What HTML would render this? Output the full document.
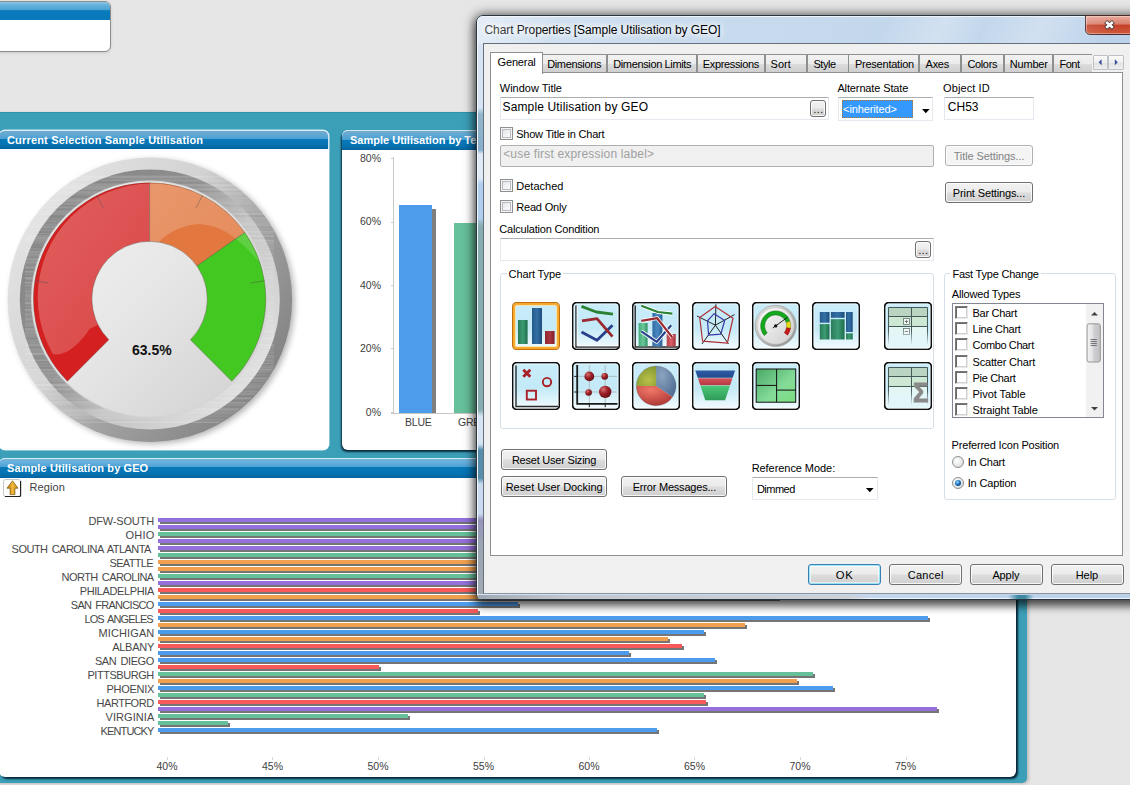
<!DOCTYPE html><html><head><meta charset="utf-8"><title>Chart Properties</title><style>
*{box-sizing:border-box}
html,body{margin:0;padding:0;background:#e6e6e6}
body{width:1130px;height:785px;overflow:hidden;background:#e6e6e6;position:relative;font-family:"Liberation Sans",sans-serif;font-size:11px;color:#000}
.abs{position:absolute}
#teal{left:-10px;top:111.6px;width:1037px;height:671.6px;background:#3c9fb8;border-top:1px solid #2a93b0;border-radius:0 0 5px 0;box-shadow:2px 1px 3px rgba(0,0,0,.18)}
#tl{left:-6px;top:1px;width:117px;height:50.8px;background:#fff;border:1px solid #8c8c8c;border-radius:6px;overflow:hidden;box-shadow:0 1px 3px rgba(0,0,0,.12)}
#tl i{display:block;height:18.2px;background:linear-gradient(#8ac4e6 0,#62b0dc 3.5px,#4aa2d4 8px,#0879ba 8.6px,#0879ba 100%)}
.panel{position:absolute;background:#fff;border-radius:6px}
.sh{position:absolute;border-radius:6px}
.ph{position:absolute;left:0;top:0;right:0;height:19px;border-top:1px solid #d4ecf8;border-right:1px solid #cfe6f4;border-radius:6px 6px 0 0;background:linear-gradient(#74aacb 0,#5fa8d4 4px,#4a9fd2 8px,#0878b9 8.5px,#0774b4 13px,#04659e 100%);color:#fff;font-weight:bold;font-size:11px;line-height:17px;padding-left:7px;white-space:nowrap;letter-spacing:0}
.cl{position:absolute;color:#404040;font-size:11px;white-space:nowrap;letter-spacing:-.3px}
.yl{position:absolute;color:#404040;font-size:10.5px;white-space:nowrap;text-align:right;width:40px}
/* dialog */
#dlg{left:476px;top:15px;width:700px;height:585px;border-radius:7px 7px 6px 6px;border:1px solid #2b3540;background:linear-gradient(90deg,#d6e4f3 0,#c9dbee 30%,#c3d7ec 60%,#b9d0e9 100%);box-shadow:0 1px 11px 2px rgba(0,0,0,.6),0 6px 9px 0 rgba(0,0,0,.42)}
#dlg:after{content:"";position:absolute;left:1px;top:1px;right:0;height:27px;border-radius:6px 6px 0 0;background:linear-gradient(115deg,rgba(255,255,255,.35) 0,rgba(255,255,255,0) 12%,rgba(255,255,255,0) 58%,rgba(255,255,255,.28) 66%,rgba(255,255,255,.05) 72%,rgba(255,255,255,.3) 80%,rgba(255,255,255,0) 90%)}
#dlg:before{content:"";position:absolute;left:0;top:0;right:0;bottom:0;border:1px solid rgba(255,255,255,.75);border-radius:6px}
#dtitle{left:7.5px;top:6px;font-size:12px;letter-spacing:-.08px;line-height:16px;white-space:nowrap;color:#000;text-shadow:0 0 6px #fff,0 0 6px #fff,0 0 10px #fff}
#close{left:608px;top:-1px;width:60px;height:20px;border:1px solid #4a2a2a;border-radius:0 0 5px 5px;background:linear-gradient(#e9a99b 0,#d8806e 45%,#c5402a 50%,#cf5a3a 100%);box-shadow:inset 0 0 0 1px rgba(255,255,255,.35)}
#client{left:6px;top:28px;width:700px;height:551px;background:#f0f0f0;border:1px solid #6a7480}
.lbl{position:absolute;white-space:nowrap;font-size:11px;line-height:13px;color:#000;letter-spacing:-.3px}
.tab{position:absolute;top:10px;height:18px;border:1px solid #8e8f8f;border-bottom:none;background:linear-gradient(#f2f2f2 0,#ebebeb 50%,#dddddd 51%,#cfcfcf 100%);font-size:11px;line-height:19px;padding-left:5px;white-space:nowrap;letter-spacing:-.35px;overflow:hidden}
.tab.sel{top:8px;height:21px;background:#fff;z-index:3;line-height:18px;padding-left:6px}
#page{left:7px;top:28px;width:633px;height:484px;background:#fff;border:1px solid #8e8f8f}
.inp{position:absolute;background:#fff;border:1px solid #e3e9ef;border-top-color:#abadb3;font-size:12px;line-height:15px;padding:5px 0 0 3px;white-space:nowrap;border-radius:1px}
.inp.dis{background:#f0f0f0;border-color:#afafaf;color:#a0a0a0;border-radius:2px}
.btn{position:absolute;border:1px solid #707070;border-radius:3px;background:linear-gradient(#f2f2f2 0,#ebebeb 48%,#dddddd 52%,#cfcfcf 100%);box-shadow:inset 0 0 0 1px rgba(255,255,255,.8);font-size:11px;text-align:center;white-space:nowrap;letter-spacing:-.3px}
.btn.dis{color:#838383;border-color:#adb2b5;background:#f4f4f4}
.btn.def{border-color:#3c7fb1;box-shadow:inset 0 0 0 1px #48d8fb88, inset 0 0 0 2px rgba(255,255,255,.6)}
.cb{position:absolute;width:13px;height:13px;border:1px solid #8e8f8f;background:linear-gradient(135deg,#d9dcdf 0,#f4f5f6 60%,#fff 100%);box-shadow:inset 0 0 0 1px #f4f4f4,inset 0 0 0 2px #b8bcc2}
.grp{position:absolute;border:1px solid #d5dfe5;border-radius:3px}
.grp>span{position:absolute;top:-8px;left:6px;background:#fff;padding:0 2px;font-size:11px;line-height:13px;white-space:nowrap}
.ico{position:absolute;width:48px;height:48px}
.lcb{position:absolute;width:13px;height:13px;background:#fff;border:1px solid #7a7a7a;border-right-color:#e8e8e8;border-bottom-color:#e8e8e8;box-shadow:inset 1px 1px 0 #6a6a6a,inset -1px -1px 0 #d0d0d0}
.radio{position:absolute;width:12px;height:12px;border-radius:50%;border:1px solid #8e8f8f;background:radial-gradient(circle at 35% 35%,#fff 0,#e4e6e8 60%,#c9ccd0 100%)}
</style></head><body>
<div id="tl" class="abs"><i></i></div>
<div id="teal" class="abs"></div>
<div class="panel" style="left:-1px;top:130px;width:329.5px;height:319.5px;box-shadow:0 0 0 .5px #d8eef8"><div class="ph" style="padding-left:8px;letter-spacing:.17px;line-height:19px">Current Selection Sample Utilisation</div></div>
<svg class="abs" style="left:0;top:150px" width="330" height="300" viewBox="0 150 330 300"><defs>
<linearGradient id="bz1" x1=".1" y1=".2" x2=".9" y2=".8"><stop offset="0" stop-color="#e2e2e2"/><stop offset=".38" stop-color="#d2d2d2"/><stop offset=".62" stop-color="#a2a2a2"/><stop offset="1" stop-color="#848484"/></linearGradient>
<linearGradient id="bz2" x1=".1" y1=".2" x2=".9" y2=".8"><stop offset="0" stop-color="#888"/><stop offset=".38" stop-color="#8e8e8e"/><stop offset=".62" stop-color="#c2c2c2"/><stop offset="1" stop-color="#dedede"/></linearGradient>
<linearGradient id="glg" gradientUnits="userSpaceOnUse" x1="50" y1="200" x2="230" y2="330"><stop offset="0" stop-color="#fff" stop-opacity=".28"/><stop offset="1" stop-color="#fff" stop-opacity=".13"/></linearGradient>
<filter id="brush" x="0" y="0" width="100%" height="100%"><feTurbulence type="fractalNoise" baseFrequency="0.004 0.45" numOctaves="2" seed="3"/><feColorMatrix type="matrix" values="0 0 0 0 1  0 0 0 0 1  0 0 0 0 1  1.6 0 0 0 -.55"/><feComposite in2="SourceGraphic" operator="in"/></filter>
<linearGradient id="face" x1="0" y1="0" x2="1" y2="1"><stop offset="0" stop-color="#f4f4f4"/><stop offset=".5" stop-color="#e6e6e6"/><stop offset="1" stop-color="#cfcfcf"/></linearGradient>
<filter id="gsh" x="-10%" y="-10%" width="125%" height="125%"><feGaussianBlur stdDeviation="3"/></filter>
<clipPath id="arcs"><path d="M67.43 381.17A116.2 116.2 0 1 1 231.77 381.17L190.40 339.80A57.7 57.7 0 1 0 108.80 339.80Z"/></clipPath>
<mask id="glm"><rect x="0" y="150" width="330" height="300" fill="#fff"/>
<path fill="#000" d="M40 349 Q54 358.5 67.3 351.5 Q80 344 89.7 328.7 L150 300 L160.6 239.8 Q178 225 200 224 Q220 225.5 234.7 237.8 Q248 248.5 259 262 L300 300 L300 440 L10 440 Z"/></mask>
</defs><circle cx="152.6" cy="302.0" r="142" fill="#000" opacity=".3" filter="url(#gsh)"/><circle cx="149.9" cy="299.8" r="142.2" fill="url(#bz1)"/><circle cx="149.79999999999998" cy="299.5" r="130" fill="url(#bz2)"/><circle cx="149.6" cy="299.0" r="124" fill="none" stroke="#fff" stroke-width="36" filter="url(#brush)" opacity=".32"/><circle cx="149.6" cy="299.0" r="118.6" fill="#d4d4d4"/><circle cx="149.6" cy="299.0" r="117.4" fill="url(#face)"/><path d="M67.43 381.17A116.2 116.2 0 0 1 149.60 182.80L149.60 241.30A57.7 57.7 0 0 0 108.80 339.80Z" fill="#d42020"/><path d="M149.60 182.80A116.2 116.2 0 0 1 244.79 232.35L196.87 265.90A57.7 57.7 0 0 0 149.60 241.30Z" fill="#e27840"/><path d="M244.79 232.35A116.2 116.2 0 0 1 231.77 381.17L190.40 339.80A57.7 57.7 0 0 0 196.87 265.90Z" fill="#42c820"/><g clip-path="url(#arcs)"><circle cx="151.29999999999998" cy="297.2" r="113.6" fill="url(#glg)" mask="url(#glm)"/></g><path d="M67.43 381.17A116.2 116.2 0 1 1 231.77 381.17L190.40 339.80A57.7 57.7 0 1 0 108.80 339.80Z" fill="none" stroke="#5a4a40" stroke-opacity=".55" stroke-width=".7"/><path d="M149.6 241.3L149.6 182.8" stroke="#5a4030" stroke-opacity=".6" stroke-width=".8"/><path d="M196.9 265.9L244.8 232.4" stroke="#5a4030" stroke-opacity=".6" stroke-width=".8"/><path d="M34.8 280.8L48.7 283.0" stroke="#555" stroke-opacity=".6" stroke-width=".8"/><path d="M96.8 195.5L103.2 207.9" stroke="#555" stroke-opacity=".6" stroke-width=".8"/><path d="M202.4 195.5L196.0 207.9" stroke="#555" stroke-opacity=".6" stroke-width=".8"/><path d="M264.4 280.8L250.5 283.0" stroke="#555" stroke-opacity=".6" stroke-width=".8"/><text x="151.8" y="354.9" text-anchor="middle" font-family="Liberation Sans, sans-serif" font-weight="bold" font-size="14" fill="#111">63.5%</text></svg>
<div class="panel" style="left:342px;top:130px;width:400px;height:319.5px;box-shadow:-1px 2px 2px rgba(0,25,40,.85)"><div class="ph" style="height:20px;line-height:19px;padding-left:8px;background:linear-gradient(#74aacb 0,#5fa8d4 4px,#4a9fd2 8.5px,#0878b9 9px,#0774b4 14px,#04659e 100%)">Sample Utilisation by Team</div></div>
<div class="yl" style="left:341px;top:150.7px;line-height:14px;letter-spacing:0">80%</div>
<div class="abs" style="left:391px;top:158px;width:2px;height:1px;background:#cfcfcf"></div>
<div class="yl" style="left:341px;top:214.2px;line-height:14px;letter-spacing:0">60%</div>
<div class="abs" style="left:391px;top:222px;width:2px;height:1px;background:#cfcfcf"></div>
<div class="yl" style="left:341px;top:277.7px;line-height:14px;letter-spacing:0">40%</div>
<div class="abs" style="left:391px;top:285px;width:2px;height:1px;background:#cfcfcf"></div>
<div class="yl" style="left:341px;top:341.2px;line-height:14px;letter-spacing:0">20%</div>
<div class="abs" style="left:391px;top:348px;width:2px;height:1px;background:#cfcfcf"></div>
<div class="yl" style="left:341px;top:404.7px;line-height:14px;letter-spacing:0">0%</div>
<div class="abs" style="left:391px;top:412px;width:2px;height:1px;background:#cfcfcf"></div>
<div class="abs" style="left:393px;top:157px;width:1px;height:257px;background:#c8c8c8"></div>
<div class="abs" style="left:391px;top:413px;width:300px;height:1px;background:#c8c8c8"></div>
<div class="abs" style="left:432px;top:209px;width:4px;height:204px;background:#7f7f7f"></div>
<div class="abs" style="left:399px;top:205px;width:33px;height:208px;background:#4d9beb"></div>
<div class="abs" style="left:454px;top:223px;width:33px;height:190px;background:#66c09a"></div>
<div class="cl" style="left:405px;top:415px;line-height:14px;letter-spacing:-.2px;font-size:10.5px">BLUE</div>
<div class="cl" style="left:458px;top:415px;line-height:14px;letter-spacing:-.2px;font-size:10.5px">GREEN</div>
<div class="panel" style="left:-1px;top:458px;width:1017px;height:319.2px;box-shadow:2px 2px 2px rgba(0,25,40,.9)"><div class="ph" style="padding-left:8px;letter-spacing:.1px;height:20px;line-height:18px;background:linear-gradient(#74b4dc 0,#62aedb 4px,#4aa2d4 8px,#0878b9 8.5px,#0774b4 14px,#04659e 100%)">Sample Utilisation by GEO</div></div>
<svg class="abs" style="left:2px;top:478px" width="20" height="20" viewBox="0 0 20 20"><defs><linearGradient id="ag" x1="0" y1="0" x2="1" y2="0"><stop offset="0" stop-color="#b87808"/><stop offset=".5" stop-color="#f0b838"/><stop offset="1" stop-color="#c88a10"/></linearGradient></defs>
<rect x="1.5" y="1.5" width="17" height="17" rx="2" fill="#fff" stroke="#c8c8c8"/><path d="M3 18.5H17.5Q18.6 18.5 18.6 17.4V3" fill="none" stroke="#222" stroke-width="1.2"/>
<path d="M10.5 2.8L16 10.2H12.9V16.6H8.1V10.2H5z" fill="url(#ag)" stroke="#7a5206" stroke-width=".7"/></svg>
<div class="cl" style="left:29.5px;top:480px;line-height:14px;letter-spacing:.12px;font-size:11px">Region</div>
<div class="cl" style="left:88.4px;top:514.3px;line-height:14px;letter-spacing:-0.164px;word-spacing:1.6px;color:#484848">DFW-SOUTH</div>
<div class="cl" style="left:125.6px;top:528.3px;line-height:14px;letter-spacing:0.196px;word-spacing:1.6px;color:#484848">OHIO</div>
<div class="cl" style="left:11.6px;top:542.3px;line-height:14px;letter-spacing:-0.517px;word-spacing:1.6px;color:#484848">SOUTH CAROLINA ATLANTA</div>
<div class="cl" style="left:109.5px;top:556.3px;line-height:14px;letter-spacing:-0.684px;word-spacing:1.6px;color:#484848">SEATTLE</div>
<div class="cl" style="left:61.6px;top:570.3px;line-height:14px;letter-spacing:-0.561px;word-spacing:1.6px;color:#484848">NORTH CAROLINA</div>
<div class="cl" style="left:79.7px;top:584.3px;line-height:14px;letter-spacing:-0.388px;word-spacing:1.6px;color:#484848">PHILADELPHIA</div>
<div class="cl" style="left:70.8px;top:598.3px;line-height:14px;letter-spacing:-0.713px;word-spacing:1.6px;color:#484848">SAN FRANCISCO</div>
<div class="cl" style="left:84.4px;top:612.3px;line-height:14px;letter-spacing:-0.873px;word-spacing:1.6px;color:#484848">LOS ANGELES</div>
<div class="cl" style="left:98.6px;top:626.3px;line-height:14px;letter-spacing:0.100px;word-spacing:1.6px;color:#484848">MICHIGAN</div>
<div class="cl" style="left:112.2px;top:640.3px;line-height:14px;letter-spacing:-0.262px;word-spacing:1.6px;color:#484848">ALBANY</div>
<div class="cl" style="left:94.9px;top:654.3px;line-height:14px;letter-spacing:-0.415px;word-spacing:1.6px;color:#484848">SAN DIEGO</div>
<div class="cl" style="left:87.4px;top:668.3px;line-height:14px;letter-spacing:-0.444px;word-spacing:1.6px;color:#484848">PITTSBURGH</div>
<div class="cl" style="left:106.5px;top:682.3px;line-height:14px;letter-spacing:-0.285px;word-spacing:1.6px;color:#484848">PHOENIX</div>
<div class="cl" style="left:96.6px;top:696.3px;line-height:14px;letter-spacing:-0.487px;word-spacing:1.6px;color:#484848">HARTFORD</div>
<div class="cl" style="left:105.5px;top:710.3px;line-height:14px;letter-spacing:0.073px;word-spacing:1.6px;color:#484848">VIRGINIA</div>
<div class="cl" style="left:100.6px;top:724.3px;line-height:14px;letter-spacing:-0.885px;word-spacing:1.6px;color:#484848">KENTUCKY</div>
<div class="abs" style="left:160px;top:520px;width:800.0px;height:4px;background:#757575"></div>
<div class="abs" style="left:158px;top:518px;width:800.0px;height:4px;background:#9370db"></div>
<div class="abs" style="left:160px;top:527px;width:790.0px;height:4px;background:#757575"></div>
<div class="abs" style="left:158px;top:525px;width:790.0px;height:4px;background:#9370db"></div>
<div class="abs" style="left:160px;top:534px;width:780.0px;height:4px;background:#757575"></div>
<div class="abs" style="left:158px;top:532px;width:780.0px;height:4px;background:#66c09a"></div>
<div class="abs" style="left:160px;top:541px;width:770.0px;height:4px;background:#757575"></div>
<div class="abs" style="left:158px;top:539px;width:770.0px;height:4px;background:#9370db"></div>
<div class="abs" style="left:160px;top:548px;width:795.0px;height:4px;background:#757575"></div>
<div class="abs" style="left:158px;top:546px;width:795.0px;height:4px;background:#9370db"></div>
<div class="abs" style="left:160px;top:555px;width:740.0px;height:4px;background:#757575"></div>
<div class="abs" style="left:158px;top:553px;width:740.0px;height:4px;background:#66c09a"></div>
<div class="abs" style="left:160px;top:562px;width:720.0px;height:4px;background:#757575"></div>
<div class="abs" style="left:158px;top:560px;width:720.0px;height:4px;background:#f0a04e"></div>
<div class="abs" style="left:160px;top:569px;width:700.0px;height:4px;background:#757575"></div>
<div class="abs" style="left:158px;top:567px;width:700.0px;height:4px;background:#f0a04e"></div>
<div class="abs" style="left:160px;top:576px;width:680.0px;height:4px;background:#757575"></div>
<div class="abs" style="left:158px;top:574px;width:680.0px;height:4px;background:#66c09a"></div>
<div class="abs" style="left:160px;top:583px;width:660.0px;height:4px;background:#757575"></div>
<div class="abs" style="left:158px;top:581px;width:660.0px;height:4px;background:#9370db"></div>
<div class="abs" style="left:160px;top:590px;width:640.0px;height:4px;background:#757575"></div>
<div class="abs" style="left:158px;top:588px;width:640.0px;height:4px;background:#f85a5a"></div>
<div class="abs" style="left:160px;top:597px;width:620.0px;height:4px;background:#757575"></div>
<div class="abs" style="left:158px;top:595px;width:620.0px;height:4px;background:#f0a04e"></div>
<div class="abs" style="left:160px;top:604px;width:360.0px;height:4px;background:#757575"></div>
<div class="abs" style="left:158px;top:602px;width:360.0px;height:4px;background:#4d9beb"></div>
<div class="abs" style="left:160px;top:611px;width:320.0px;height:4px;background:#757575"></div>
<div class="abs" style="left:158px;top:609px;width:320.0px;height:4px;background:#f85a5a"></div>
<div class="abs" style="left:160px;top:618px;width:770.0px;height:4px;background:#757575"></div>
<div class="abs" style="left:158px;top:616px;width:770.0px;height:4px;background:#4d9beb"></div>
<div class="abs" style="left:160px;top:625px;width:587.0px;height:4px;background:#757575"></div>
<div class="abs" style="left:158px;top:623px;width:587.0px;height:4px;background:#f0a04e"></div>
<div class="abs" style="left:160px;top:632px;width:545.5px;height:4px;background:#757575"></div>
<div class="abs" style="left:158px;top:630px;width:545.5px;height:4px;background:#4d9beb"></div>
<div class="abs" style="left:160px;top:639px;width:510.0px;height:4px;background:#757575"></div>
<div class="abs" style="left:158px;top:637px;width:510.0px;height:4px;background:#f0a04e"></div>
<div class="abs" style="left:160px;top:646px;width:524.0px;height:4px;background:#757575"></div>
<div class="abs" style="left:158px;top:644px;width:524.0px;height:4px;background:#f85a5a"></div>
<div class="abs" style="left:160px;top:653px;width:471.0px;height:4px;background:#757575"></div>
<div class="abs" style="left:158px;top:651px;width:471.0px;height:4px;background:#4d9beb"></div>
<div class="abs" style="left:160px;top:660px;width:557.0px;height:4px;background:#757575"></div>
<div class="abs" style="left:158px;top:658px;width:557.0px;height:4px;background:#4d9beb"></div>
<div class="abs" style="left:160px;top:667px;width:221.0px;height:4px;background:#757575"></div>
<div class="abs" style="left:158px;top:665px;width:221.0px;height:4px;background:#f85a5a"></div>
<div class="abs" style="left:160px;top:674px;width:655.0px;height:4px;background:#757575"></div>
<div class="abs" style="left:158px;top:672px;width:655.0px;height:4px;background:#66c09a"></div>
<div class="abs" style="left:160px;top:681px;width:639.0px;height:4px;background:#757575"></div>
<div class="abs" style="left:158px;top:679px;width:639.0px;height:4px;background:#f0a04e"></div>
<div class="abs" style="left:160px;top:688px;width:675.0px;height:4px;background:#757575"></div>
<div class="abs" style="left:158px;top:686px;width:675.0px;height:4px;background:#4d9beb"></div>
<div class="abs" style="left:160px;top:695px;width:546.0px;height:4px;background:#757575"></div>
<div class="abs" style="left:158px;top:693px;width:546.0px;height:4px;background:#66c09a"></div>
<div class="abs" style="left:160px;top:702px;width:548.0px;height:4px;background:#757575"></div>
<div class="abs" style="left:158px;top:700px;width:548.0px;height:4px;background:#f85a5a"></div>
<div class="abs" style="left:160px;top:709px;width:779.0px;height:4px;background:#757575"></div>
<div class="abs" style="left:158px;top:707px;width:779.0px;height:4px;background:#9370db"></div>
<div class="abs" style="left:160px;top:716px;width:250.0px;height:4px;background:#757575"></div>
<div class="abs" style="left:158px;top:714px;width:250.0px;height:4px;background:#66c09a"></div>
<div class="abs" style="left:160px;top:723px;width:70.0px;height:4px;background:#757575"></div>
<div class="abs" style="left:158px;top:721px;width:70.0px;height:4px;background:#66c09a"></div>
<div class="abs" style="left:160px;top:730px;width:499.0px;height:4px;background:#757575"></div>
<div class="abs" style="left:158px;top:728px;width:499.0px;height:4px;background:#4d9beb"></div>
<div class="cl" style="left:147.0px;width:40px;text-align:center;top:759px;line-height:14px;letter-spacing:0;font-size:10.5px">40%</div>
<div class="abs" style="left:167px;top:757px;width:1px;height:3px;background:#d8d8d8"></div>
<div class="cl" style="left:252.5px;width:40px;text-align:center;top:759px;line-height:14px;letter-spacing:0;font-size:10.5px">45%</div>
<div class="abs" style="left:272px;top:757px;width:1px;height:3px;background:#d8d8d8"></div>
<div class="cl" style="left:358.0px;width:40px;text-align:center;top:759px;line-height:14px;letter-spacing:0;font-size:10.5px">50%</div>
<div class="abs" style="left:378px;top:757px;width:1px;height:3px;background:#d8d8d8"></div>
<div class="cl" style="left:463.5px;width:40px;text-align:center;top:759px;line-height:14px;letter-spacing:0;font-size:10.5px">55%</div>
<div class="abs" style="left:484px;top:757px;width:1px;height:3px;background:#d8d8d8"></div>
<div class="cl" style="left:569.0px;width:40px;text-align:center;top:759px;line-height:14px;letter-spacing:0;font-size:10.5px">60%</div>
<div class="abs" style="left:589px;top:757px;width:1px;height:3px;background:#d8d8d8"></div>
<div class="cl" style="left:674.5px;width:40px;text-align:center;top:759px;line-height:14px;letter-spacing:0;font-size:10.5px">65%</div>
<div class="abs" style="left:694px;top:757px;width:1px;height:3px;background:#d8d8d8"></div>
<div class="cl" style="left:780.0px;width:40px;text-align:center;top:759px;line-height:14px;letter-spacing:0;font-size:10.5px">70%</div>
<div class="abs" style="left:800px;top:757px;width:1px;height:3px;background:#d8d8d8"></div>
<div class="cl" style="left:885.5px;width:40px;text-align:center;top:759px;line-height:14px;letter-spacing:0;font-size:10.5px">75%</div>
<div class="abs" style="left:906px;top:757px;width:1px;height:3px;background:#d8d8d8"></div><div id="dlg" class="abs"><div id="dtitle" class="abs">Chart Properties [Sample Utilisation by GEO]</div>
<div id="close" class="abs"><svg width="58" height="18" viewBox="0 0 58 18" style="position:absolute;left:0;top:0"><path d="M19.6 5.6L27.4 12.2M27.4 5.6L19.6 12.2" stroke="#4a3a3a" stroke-width="4.4" stroke-linecap="butt"/><path d="M20.2 6.1L26.8 11.7M26.8 6.1L20.2 11.7" stroke="#fff" stroke-width="2.6" stroke-linecap="butt"/></svg></div>
</div>
<div class="abs" style="left:477.5px;top:22px;width:5.5px;height:572px;background:linear-gradient(180deg,rgba(220,232,245,0) 0px,rgba(220,232,245,0) 86px,#86aec2 92px,#7aa6c8 128px,#e2ebf6 132px,#e2ebf6 156px,#a9c9f0 162px,#a9c9f0 196px,#7aa3a4 204px,#7aa3a4 388px,#d5e3f3 394px,#d5e3f3 422px,#3f7f9f 428px,#3f7f9f 456px,#c8d8f0 462px,#c8d8f0 492px,#8c84b2 498px,#909aa6 523px,#98a0a8 572px);opacity:.85"></div>
<div class="abs" style="left:478px;top:594.5px;width:660px;height:4.5px;background:linear-gradient(90deg,#9aa2ac 0,#c0c5cb 90px,#cdd1d6 370px,rgba(190,212,238,0) 392px,rgba(190,212,238,0) 530px,#2f7f98 540px,#2f7f98 547px,rgba(190,212,238,0) 556px);opacity:.9"></div>
<div class="abs" style="left:483px;top:43px;width:660px;height:551px;background:#f0f0f0;border:1px solid #66707c;border-bottom-color:#8a939e"></div>
<div class="abs" style="left:490px;top:72px;width:633px;height:484px;background:#fff;border:1px solid #8e8f8f"></div>
<div class="tab sel" style="left:490px;top:52px;width:52.7px;height:21.5px;padding-left:6.5px;letter-spacing:-0.139px">General</div>
<div class="tab" style="left:542.3px;top:54.4px;width:65.0px;height:18px;padding-left:3.9px;letter-spacing:-0.352px">Dimensions</div>
<div class="tab" style="left:607px;top:54.4px;width:90.0px;height:18px;padding-left:5.2px;letter-spacing:-0.363px">Dimension Limits</div>
<div class="tab" style="left:696.7px;top:54.4px;width:68.4px;height:18px;padding-left:5.1px;letter-spacing:-0.351px">Expressions</div>
<div class="tab" style="left:764.8px;top:54.4px;width:42.0px;height:18px;padding-left:4.8px;letter-spacing:0.009px">Sort</div>
<div class="tab" style="left:806.5px;top:54.4px;width:42.0px;height:18px;padding-left:5.9px;letter-spacing:-0.414px">Style</div>
<div class="tab" style="left:848.2px;top:54.4px;width:71.3px;height:18px;padding-left:5.7px;letter-spacing:-0.224px">Presentation</div>
<div class="tab" style="left:919.2px;top:54.4px;width:42.3px;height:18px;padding-left:5.4px;letter-spacing:-0.285px">Axes</div>
<div class="tab" style="left:961.2px;top:54.4px;width:42.7px;height:18px;padding-left:5.2px;letter-spacing:-0.337px">Colors</div>
<div class="tab" style="left:1003.6px;top:54.4px;width:49.3px;height:18px;padding-left:5.1px;letter-spacing:-0.165px">Number</div>
<div class="tab" style="left:1052.6px;top:54.4px;width:41.4px;height:18px;padding-left:5.8px;letter-spacing:-0.437px">Font</div>
<div class="abs" style="left:1091.5px;top:52px;width:33px;height:20.4px;background:#f0f0f0"></div>
<div class="abs" style="left:1092.5px;top:55px;width:15.5px;height:14.5px;border:1px solid #bcc2c8;background:linear-gradient(#fbfbfb,#eeeeee 50%,#e0e0e0 51%,#f0f0f0);border-radius:1px"><svg width="14" height="13" style="position:absolute;left:0;top:0"><path d="M7.6 3.2L4.6 6.2L7.6 9.2z" fill="#3a4e9e"/></svg></div>
<div class="abs" style="left:1108px;top:55px;width:15.5px;height:14.5px;border:1px solid #bcc2c8;background:linear-gradient(#fbfbfb,#eeeeee 50%,#e0e0e0 51%,#f0f0f0);border-radius:1px"><svg width="14" height="13" style="position:absolute;left:0;top:0"><path d="M5.8 3.2L8.8 6.2L5.8 9.2z" fill="#3a4e9e"/></svg></div>
<div class="lbl" style="left:499.8px;top:81.6px;font-size:11px;letter-spacing:-0.015px;">Window Title</div>
<div class="lbl" style="left:837.4px;top:81.6px;font-size:11px;letter-spacing:-0.126px;">Alternate State</div>
<div class="lbl" style="left:943.1px;top:81.6px;font-size:11px;letter-spacing:0.082px;">Object ID</div>
<div class="inp" style="left:500px;top:97px;width:329px;height:23px;padding:1.6px 0 0 1.5px;letter-spacing:0.144px">Sample Utilisation by GEO</div>
<div class="btn" style="left:810px;top:100px;width:16px;height:17px;font-size:10px;line-height:18px;letter-spacing:.6px;padding-left:1px">...</div>
<div class="inp" style="left:838px;top:97px;width:95px;height:24px;padding:0"><div style="position:absolute;left:2.5px;top:2.4px;width:71.5px;height:17.6px;background:#3399ff;border:1px dotted #b8742a;color:#fff;font-size:11px;line-height:17px;padding-left:.6px;letter-spacing:-0.124px">&lt;inherited&gt;</div><svg width="10" height="6" style="position:absolute;left:83px;top:10.5px"><path d="M0 0H7.6L3.8 4.2z" fill="#000"/></svg></div>
<div class="inp" style="left:944px;top:97px;width:90px;height:23px;padding:1.6px 0 0 2.8px">CH53</div>
<div class="cb" style="left:500px;top:127px"></div>
<div class="lbl" style="left:516.2px;top:128.0px;font-size:11px;letter-spacing:-0.218px;">Show Title in Chart</div>
<div class="inp dis" style="left:500px;top:145px;width:434px;height:22px;padding:1.3px 0 0 2.2px;letter-spacing:0.175px">&lt;use first expression label&gt;</div>
<div class="btn dis" style="left:945px;top:145px;width:88px;height:20.6px;line-height:20.6px;letter-spacing:-0.097px">Title Settings...</div>
<div class="cb" style="left:500px;top:179px"></div>
<div class="lbl" style="left:516.2px;top:180.0px;font-size:11px;letter-spacing:0.030px;">Detached</div>
<div class="btn" style="left:945px;top:182px;width:88px;height:20.8px;line-height:20.6px;letter-spacing:-0.137px">Print Settings...</div>
<div class="cb" style="left:500px;top:200px"></div>
<div class="lbl" style="left:516.2px;top:201.1px;font-size:11px;letter-spacing:-0.171px;">Read Only</div>
<div class="lbl" style="left:499.3px;top:222.6px;font-size:11px;letter-spacing:-0.188px;">Calculation Condition</div>
<div class="inp" style="left:500px;top:238px;width:434px;height:23px"></div>
<div class="btn" style="left:915px;top:241px;width:16px;height:17px;font-size:10px;line-height:18px;letter-spacing:.6px;padding-left:1px">...</div>
<div class="grp" style="left:500px;top:273px;width:434px;height:155.5px"><span style="left:5.6px;top:-6.4px;letter-spacing:-0.123px">Chart Type</span></div>
<div class="grp" style="left:943.7px;top:273px;width:172.3px;height:227px"><span style="left:5.7px;top:-6.4px;letter-spacing:-0.206px">Fast Type Change</span></div>
<div class="lbl" style="left:951.8px;top:287.5px;font-size:11px;letter-spacing:-0.169px;">Allowed Types</div>
<div class="abs" style="left:952px;top:303px;width:152px;height:115.4px;background:#fff;border:1px solid #828790"></div>
<div class="lcb" style="left:955px;top:305.9px"></div>
<div class="lbl" style="left:972.6px;top:306.9px;font-size:11px;letter-spacing:-0.309px;">Bar Chart</div>
<div class="lcb" style="left:955px;top:322.1px"></div>
<div class="lbl" style="left:972.6px;top:323.1px;font-size:11px;letter-spacing:-0.272px;">Line Chart</div>
<div class="lcb" style="left:955px;top:338.3px"></div>
<div class="lbl" style="left:972.6px;top:339.3px;font-size:11px;letter-spacing:-0.381px;">Combo Chart</div>
<div class="lcb" style="left:955px;top:354.5px"></div>
<div class="lbl" style="left:972.6px;top:355.5px;font-size:11px;letter-spacing:-0.184px;">Scatter Chart</div>
<div class="lcb" style="left:955px;top:370.7px"></div>
<div class="lbl" style="left:972.6px;top:371.7px;font-size:11px;letter-spacing:-0.332px;">Pie Chart</div>
<div class="lcb" style="left:955px;top:386.9px"></div>
<div class="lbl" style="left:972.6px;top:387.9px;font-size:11px;letter-spacing:-0.063px;">Pivot Table</div>
<div class="lcb" style="left:955px;top:403.1px"></div>
<div class="lbl" style="left:972.6px;top:404.1px;font-size:11px;letter-spacing:-0.145px;">Straight Table</div>
<div class="abs" style="left:1086px;top:304px;width:17px;height:113.4px;background:#f1f1f1"></div>
<svg class="abs" style="left:1086px;top:304px" width="17" height="114"><path d="M5 11.5L8.5 8L12 11.5z" fill="#404040"/><path d="M5 103L8.5 106.5L12 103z" fill="#404040"/><defs><linearGradient id="sth" x1="0" y1="0" x2="1" y2="0"><stop offset="0" stop-color="#f4f4f4"/><stop offset=".45" stop-color="#e0e0e2"/><stop offset=".5" stop-color="#cfcfd2"/><stop offset="1" stop-color="#c2c2c6"/></linearGradient></defs><rect x="1.1" y="19.8" width="13.2" height="38.2" rx="2" fill="url(#sth)" stroke="#979797"/><path d="M4.6 35.5H10.8M4.6 37.5H10.8M4.6 39.5H10.8M4.6 41.5H10.8" stroke="#70747a" stroke-width="1"/></svg>
<div class="lbl" style="left:951.6px;top:438.8px;font-size:11px;letter-spacing:-0.195px;">Preferred Icon Position</div>
<div class="radio" style="left:952px;top:456.4px"></div>
<div class="lbl" style="left:967.7px;top:455.7px;font-size:11px;letter-spacing:-0.247px;">In Chart</div>
<div class="radio" style="left:952px;top:477px"><i style="position:absolute;left:2px;top:2px;width:6px;height:6px;border-radius:50%;background:radial-gradient(circle at 40% 35%,#9fe0ff 0,#1a6fb8 45%,#0a2f5c 100%)"></i></div>
<div class="lbl" style="left:967.7px;top:476.8px;font-size:11px;letter-spacing:-0.149px;">In Caption</div>
<div class="btn" style="left:501px;top:449.2px;width:106px;height:20.4px"><span style="position:absolute;left:9.9px;top:0;line-height:20.0px;font-size:11px;letter-spacing:-0.221px">Reset User Sizing</span></div>
<div class="btn" style="left:501px;top:476.2px;width:106px;height:20.5px"><span style="position:absolute;left:3.7px;top:0;line-height:20.1px;font-size:11px;letter-spacing:-0.054px">Reset User Docking</span></div>
<div class="btn" style="left:621px;top:476.2px;width:106px;height:20.5px"><span style="position:absolute;left:10.7px;top:0;line-height:20.1px;font-size:11px;letter-spacing:-0.206px">Error Messages...</span></div>
<div class="lbl" style="left:751.7px;top:462.2px;font-size:11px;letter-spacing:-0.063px;">Reference Mode:</div>
<div class="inp" style="left:752.3px;top:477px;width:125.4px;height:23.4px;font-size:11px;padding:3.6px 0 0 3.6px;letter-spacing:-0.510px">Dimmed<svg width="10" height="6" style="position:absolute;left:112.6px;top:10px"><path d="M0 0H7.6L3.8 4.2z" fill="#000"/></svg></div>
<div class="btn def" style="left:808.4px;top:564.4px;width:72.6px;height:20.4px"><span style="position:absolute;left:26.3px;top:0;line-height:20.0px;font-size:11.3px;letter-spacing:0.773px">OK</span></div>
<div class="btn" style="left:889.3px;top:564.4px;width:72.6px;height:20.4px"><span style="position:absolute;left:17.4px;top:0;line-height:20.0px;font-size:11px;letter-spacing:0.312px">Cancel</span></div>
<div class="btn" style="left:970.2px;top:564.4px;width:72.6px;height:20.4px"><span style="position:absolute;left:21.2px;top:0;line-height:20.0px;font-size:11px;letter-spacing:-0.104px">Apply</span></div>
<div class="btn" style="left:1051.1px;top:564.4px;width:72.6px;height:20.4px"><span style="position:absolute;left:23.6px;top:0;line-height:20.0px;font-size:11px;letter-spacing:-0.041px">Help</span></div><svg width="0" height="0" style="position:absolute"><defs>
<linearGradient id="ibg" x1="0" y1="0" x2="0" y2="1"><stop offset="0" stop-color="#c9ecf9"/><stop offset=".55" stop-color="#c4eaf7"/><stop offset=".85" stop-color="#e4f6fc"/><stop offset="1" stop-color="#f4fbfe"/></linearGradient>
<linearGradient id="gG" x1="0" y1="0" x2="1" y2="0"><stop offset="0" stop-color="#2a7a58"/><stop offset=".5" stop-color="#3c9c74"/><stop offset="1" stop-color="#1f6e4c"/></linearGradient>
<linearGradient id="gB" x1="0" y1="0" x2="1" y2="0"><stop offset="0" stop-color="#255a8a"/><stop offset=".5" stop-color="#3470a6"/><stop offset="1" stop-color="#1c4c7a"/></linearGradient>
<linearGradient id="gR" x1="0" y1="0" x2="1" y2="0"><stop offset="0" stop-color="#8e2630"/><stop offset=".5" stop-color="#aa3540"/><stop offset="1" stop-color="#80202a"/></linearGradient>
<linearGradient id="gG2" x1="0" y1="0" x2="1" y2="0"><stop offset="0" stop-color="#3fa878"/><stop offset=".5" stop-color="#6cc898"/><stop offset="1" stop-color="#2f9466"/></linearGradient>
<linearGradient id="gB2" x1="0" y1="0" x2="1" y2="0"><stop offset="0" stop-color="#2f6aa2"/><stop offset=".5" stop-color="#4a88c0"/><stop offset="1" stop-color="#2a5f96"/></linearGradient>
<linearGradient id="gR2" x1="0" y1="0" x2="1" y2="0"><stop offset="0" stop-color="#b84048"/><stop offset=".5" stop-color="#d86068"/><stop offset="1" stop-color="#a8343c"/></linearGradient>
<radialGradient id="bub" cx=".35" cy=".3" r=".8"><stop offset="0" stop-color="#d87070"/><stop offset=".45" stop-color="#9c2028"/><stop offset="1" stop-color="#5c0c12"/></radialGradient>
<linearGradient id="gface" x1="0" y1="0" x2="1" y2="1"><stop offset="0" stop-color="#fafafa"/><stop offset="1" stop-color="#cfcfcf"/></linearGradient>
<linearGradient id="gbez" x1="0" y1="0" x2="1" y2="1"><stop offset="0" stop-color="#e8e8e8"/><stop offset=".5" stop-color="#b8b8b8"/><stop offset="1" stop-color="#8c8c8c"/></linearGradient>
<linearGradient id="blk" x1="0" y1="0" x2="1" y2="1"><stop offset="0" stop-color="#4aa868"/><stop offset=".6" stop-color="#84dc98"/><stop offset="1" stop-color="#7adc80"/></linearGradient>
<linearGradient id="tbl" x1="0" y1="0" x2="0" y2="1"><stop offset="0" stop-color="#e2f6fa" stop-opacity="0"/><stop offset=".6" stop-color="#e2f6fa" stop-opacity="0"/><stop offset=".95" stop-color="#e2f6fa" stop-opacity="1"/></linearGradient><filter id="sblur"><feGaussianBlur stdDeviation=".55"/></filter>
<linearGradient id="tbg" x1="0" y1="0" x2="0" y2="1"><stop offset="0" stop-color="#e6f6ec"/><stop offset="1" stop-color="#e2f6fa"/></linearGradient>
<linearGradient id="fB" x1="0" y1="0" x2="0" y2="1"><stop offset="0" stop-color="#2c5ca8"/><stop offset="1" stop-color="#244a8a"/></linearGradient>
<linearGradient id="fR" x1="0" y1="0" x2="0" y2="1"><stop offset="0" stop-color="#d85058"/><stop offset="1" stop-color="#b43a42"/></linearGradient>
<linearGradient id="fG" x1="0" y1="0" x2="0" y2="1"><stop offset="0" stop-color="#4cc878"/><stop offset="1" stop-color="#2f9a58"/></linearGradient>
<radialGradient id="pB" cx=".3" cy=".3" r=".9"><stop offset="0" stop-color="#8ca4c0"/><stop offset="1" stop-color="#4a6890"/></radialGradient>
<radialGradient id="pR" cx=".4" cy=".2" r=".9"><stop offset="0" stop-color="#f07868"/><stop offset="1" stop-color="#a83030"/></radialGradient>
<radialGradient id="pG" cx=".6" cy=".7" r=".9"><stop offset="0" stop-color="#b8c048"/><stop offset="1" stop-color="#7c9030"/></radialGradient>
</defs></svg>
<svg class="ico" style="left:512px;top:302px" viewBox="0 0 48 48"><rect x=".6" y=".6" width="46.8" height="46.8" rx="3.8" fill="url(#ibg)" stroke="#c07010" stroke-width="1.2"/><rect x="2" y="2" width="44" height="44" rx="2.8" fill="none" stroke="#f8a828" stroke-width="2"/><rect x="3.4" y="3.4" width="41.2" height="41.2" rx="2.2" fill="none" stroke="#fde0a0" stroke-width=".9"/><rect x="6" y="18" width="9.6" height="24" fill="url(#gG)"/><rect x="20" y="6" width="10" height="36" fill="url(#gB)"/><rect x="33" y="29" width="9.6" height="13" fill="url(#gR)"/></svg>
<svg class="ico" style="left:572px;top:302px" viewBox="0 0 48 48"><rect x=".7" y=".7" width="46.6" height="46.6" rx="3.8" fill="url(#ibg)" stroke="#101010" stroke-width="1.8"/><rect x="2" y="2" width="44" height="44" rx="2.6" fill="none" stroke="#fff" stroke-opacity=".65" stroke-width="1"/><path d="M4 3.5V45H46" fill="none" stroke="#2a2a2a" stroke-width="1.4"/><path d="M5.2 4V43.8H46" fill="none" stroke="#fff" stroke-opacity=".8" stroke-width="1"/><path d="M9.5 4.4L24.3 10L41 12.2" fill="none" stroke="#2c8234" stroke-width="2.8" stroke-linejoin="round"/><path d="M9.5 29.9L25 38.3L40.5 23.2" fill="none" stroke="#27408c" stroke-width="2.8" stroke-linejoin="round"/><path d="M10 18.8L25 16.6L40.5 34.7" fill="none" stroke="#982a30" stroke-width="2.8" stroke-linejoin="round"/></svg>
<svg class="ico" style="left:632px;top:302px" viewBox="0 0 48 48"><rect x=".7" y=".7" width="46.6" height="46.6" rx="3.8" fill="url(#ibg)" stroke="#101010" stroke-width="1.8"/><rect x="2" y="2" width="44" height="44" rx="2.6" fill="none" stroke="#fff" stroke-opacity=".65" stroke-width="1"/><path d="M3.2 3.5V45H46" fill="none" stroke="#2a2a2a" stroke-width="1.4"/><rect x="6.6" y="21" width="9" height="23.4" fill="url(#gG2)"/><rect x="20.4" y="11" width="10" height="33.4" fill="url(#gB2)"/><rect x="34.7" y="32" width="9" height="12.4" fill="url(#gR2)"/><path d="M9.3 3.8L25.9 10L40.3 11.7" fill="none" stroke="#fff" stroke-width="3.8000000000000003" stroke-linejoin="round"/><path d="M9.3 3.8L25.9 10L40.3 11.7" fill="none" stroke="#2c8234" stroke-width="2.2" stroke-linejoin="round"/><path d="M9.3 29.4L24.8 39.8L39.2 23.2" fill="none" stroke="#fff" stroke-width="3.8000000000000003" stroke-linejoin="round"/><path d="M9.3 29.4L24.8 39.8L39.2 23.2" fill="none" stroke="#27408c" stroke-width="2.2" stroke-linejoin="round"/><path d="M9.3 18.8L25.2 16.2L40.3 35.4" fill="none" stroke="#fff" stroke-width="3.8000000000000003" stroke-linejoin="round"/><path d="M9.3 18.8L25.2 16.2L40.3 35.4" fill="none" stroke="#982a30" stroke-width="2.2" stroke-linejoin="round"/></svg>
<svg class="ico" style="left:692px;top:302px" viewBox="0 0 48 48"><rect x=".7" y=".7" width="46.6" height="46.6" rx="3.8" fill="url(#ibg)" stroke="#101010" stroke-width="1.8"/><rect x="2" y="2" width="44" height="44" rx="2.6" fill="none" stroke="#fff" stroke-opacity=".65" stroke-width="1"/><path d="M23.4 23.2L23.9 2.2" stroke="#222" stroke-width="1"/><path d="M23.4 23.2L42.5 12.6" stroke="#222" stroke-width="1"/><path d="M23.4 23.2L36.5 42" stroke="#222" stroke-width="1"/><path d="M23.4 23.2L10 42" stroke="#222" stroke-width="1"/><path d="M23.4 23.2L5 14" stroke="#222" stroke-width="1"/><path d="M23.2 4.4L41 16.2L35.4 41L10.6 39.2L7.7 15.5z" fill="none" stroke="#b03038" stroke-width="1.2"/><path d="M22.1 11.7L32.7 18.4L28.8 32.1L16.6 33.2L15.5 18.8z" fill="none" stroke="#3838a8" stroke-width="1.2"/></svg>
<svg class="ico" style="left:752px;top:302px" viewBox="0 0 48 48"><rect x=".7" y=".7" width="46.6" height="46.6" rx="3.8" fill="url(#ibg)" stroke="#101010" stroke-width="1.8"/><rect x="2" y="2" width="44" height="44" rx="2.6" fill="none" stroke="#fff" stroke-opacity=".65" stroke-width="1"/><circle cx="23.7" cy="23.9" r="20.6" fill="url(#gbez)" stroke="#9a9a9a" stroke-width=".6"/><circle cx="23.7" cy="23.9" r="18.2" fill="url(#gface)" stroke="#c8c8c8" stroke-width=".5"/><path d="M12.21 33.54A15 15 0 1 1 37.97 19.26L34.16 20.50A11 11 0 1 0 15.27 30.97Z" fill="#14a81c" stroke="#0c6c10" stroke-width=".5"/><path d="M37.97 19.26A15 15 0 0 1 38.47 26.50L34.53 25.81A11 11 0 0 0 34.16 20.50Z" fill="#e8dc18" stroke="#8a8208" stroke-width=".5"/><path d="M38.47 26.50A15 15 0 0 1 35.52 33.13L32.37 30.67A11 11 0 0 0 34.53 25.81Z" fill="#cc1818" stroke="#7a0c0c" stroke-width=".5"/><path d="M20.7 26L35.4 15.4" stroke="#111" stroke-width=".9"/><circle cx="23.7" cy="23.9" r="1.7" fill="#111"/></svg>
<svg class="ico" style="left:812px;top:302px" viewBox="0 0 48 48"><rect x=".7" y=".7" width="46.6" height="46.6" rx="3.8" fill="url(#ibg)" stroke="#101010" stroke-width="1.8"/><rect x="2" y="2" width="44" height="44" rx="2.6" fill="none" stroke="#fff" stroke-opacity=".65" stroke-width="1"/><rect x="7.8" y="10" width="9.7" height="10.7" fill="url(#gB)"/><rect x="7.8" y="22.1" width="9.7" height="15.4" fill="url(#gG)"/><rect x="18.9" y="10" width="13.7" height="5.8" fill="url(#gB)"/><rect x="18.9" y="17.2" width="13.7" height="20.3" fill="url(#gG)"/><rect x="34" y="10" width="6.7" height="20" fill="url(#gB)"/><rect x="34" y="31.3" width="6.7" height="6.2" fill="url(#gG)"/></svg>
<svg class="ico" style="left:884px;top:302px" viewBox="0 0 48 48"><rect x=".7" y=".7" width="46.6" height="46.6" rx="3.8" fill="url(#ibg)" stroke="#101010" stroke-width="1.8"/><rect x="2" y="2" width="44" height="44" rx="2.6" fill="none" stroke="#fff" stroke-opacity=".65" stroke-width="1"/><rect x="4.5" y="5.5" width="39" height="40" fill="url(#tbg)"/><rect x="4.5" y="5.5" width="39" height="9" fill="#b9d5c1"/><rect x="4.5" y="14.5" width="39" height="10" fill="#cde8d2"/><path d="M4.5 5.5H43.5M4.5 14.5H43.5M4.5 24.5H43.5M4.5 5.5V44M27.5 5.5V44M43.5 5.5V44" fill="none" stroke="#45585a" stroke-width="1"/><rect x="19.5" y="16.5" width="6" height="6" fill="#f4faf6" stroke="#6a7474" stroke-width=".8"/><path d="M20.8 19.5H24.2M22.5 17.8V21.2" stroke="#556060" stroke-width=".8"/><rect x="19.5" y="26.5" width="6" height="6" fill="#f4faf6" stroke="#6a7474" stroke-width=".8"/><path d="M20.8 29.5H24.2" stroke="#556060" stroke-width=".8"/><rect x="2.5" y="2.5" width="43" height="43" rx="3" fill="url(#tbl)"/></svg>
<svg class="ico" style="left:512px;top:362px" viewBox="0 0 48 48"><rect x=".7" y=".7" width="46.6" height="46.6" rx="3.8" fill="url(#ibg)" stroke="#101010" stroke-width="1.8"/><rect x="2" y="2" width="44" height="44" rx="2.6" fill="none" stroke="#fff" stroke-opacity=".65" stroke-width="1"/><path d="M4 3.5V44.5H46" fill="none" stroke="#2a2a2a" stroke-width="1.4"/><path d="M11.3 7.8L18.3 14.8M18.3 7.8L11.3 14.8" stroke="#a82028" stroke-width="2.9"/><circle cx="35" cy="20.1" r="4.2" fill="none" stroke="#a82028" stroke-width="1.9"/><rect x="14.8" y="28.7" width="9.2" height="8.8" fill="none" stroke="#a82028" stroke-width="1.9"/></svg>
<svg class="ico" style="left:572px;top:362px" viewBox="0 0 48 48"><rect x=".7" y=".7" width="46.6" height="46.6" rx="3.8" fill="url(#ibg)" stroke="#101010" stroke-width="1.8"/><rect x="2" y="2" width="44" height="44" rx="2.6" fill="none" stroke="#fff" stroke-opacity=".65" stroke-width="1"/><path d="M5 14.4H45M5 30H45M17.3 3V41.6M33.2 3V41.6" stroke="#a8b4b8" stroke-width=".8"/><path d="M5.2 3V41.8H45.5" fill="none" stroke="#1a1a1a" stroke-width="1.8"/><path d="M17.3 41.8V45.2M33.2 41.8V45.2M2.2 14.4H5M2.2 30H5" stroke="#1a1a1a" stroke-width="1"/><circle cx="17.3" cy="14.4" r="4.9" fill="url(#bub)"/><circle cx="32.7" cy="14.4" r="3.3" fill="url(#bub)"/><circle cx="16.6" cy="30.5" r="3.3" fill="url(#bub)"/><circle cx="33.2" cy="29.9" r="6.2" fill="url(#bub)"/></svg>
<svg class="ico" style="left:632px;top:362px" viewBox="0 0 48 48"><rect x=".7" y=".7" width="46.6" height="46.6" rx="3.8" fill="url(#ibg)" stroke="#101010" stroke-width="1.8"/><rect x="2" y="2" width="44" height="44" rx="2.6" fill="none" stroke="#fff" stroke-opacity=".65" stroke-width="1"/><path d="M24.1 23.9L24.10 4.10A19.8 19.8 0 0 1 40.51 34.97Z" fill="url(#pB)"/><path d="M24.1 23.9L40.51 34.97A19.8 19.8 0 0 1 4.30 23.90Z" fill="url(#pR)"/><path d="M24.1 23.9L4.30 23.90A19.8 19.8 0 0 1 24.10 4.10Z" fill="url(#pG)"/><circle cx="24.1" cy="23.9" r="19.8" fill="none" stroke="#666" stroke-opacity=".5" stroke-width=".6"/></svg>
<svg class="ico" style="left:692px;top:362px" viewBox="0 0 48 48"><rect x=".7" y=".7" width="46.6" height="46.6" rx="3.8" fill="url(#ibg)" stroke="#101010" stroke-width="1.8"/><rect x="2" y="2" width="44" height="44" rx="2.6" fill="none" stroke="#fff" stroke-opacity=".65" stroke-width="1"/><path d="M3.30 8.4L43.10 8.4L40.66 15.7L5.74 15.7Z" fill="url(#fB)"/><path d="M5.94 16.3L40.46 16.3L38.15 23.2L8.25 23.2Z" fill="url(#fR)"/><path d="M8.45 23.8L37.95 23.8L33.10 38.3L13.30 38.3Z" fill="url(#fG)"/></svg>
<svg class="ico" style="left:752px;top:362px" viewBox="0 0 48 48"><rect x=".7" y=".7" width="46.6" height="46.6" rx="3.8" fill="url(#ibg)" stroke="#101010" stroke-width="1.8"/><rect x="2" y="2" width="44" height="44" rx="2.6" fill="none" stroke="#fff" stroke-opacity=".65" stroke-width="1"/><rect x="4.2" y="7" width="39.5" height="33.2" fill="url(#blk)" stroke="#111" stroke-width="1"/><path d="M24.6 7V40.2M4.2 23.4H24.6M24.6 28.1H43.7" stroke="#111" stroke-width="1"/></svg>
<svg class="ico" style="left:884px;top:362px" viewBox="0 0 48 48"><rect x=".7" y=".7" width="46.6" height="46.6" rx="3.8" fill="url(#ibg)" stroke="#101010" stroke-width="1.8"/><rect x="2" y="2" width="44" height="44" rx="2.6" fill="none" stroke="#fff" stroke-opacity=".65" stroke-width="1"/><rect x="4.5" y="5.5" width="39" height="40" fill="url(#tbg)"/><rect x="4.5" y="5.5" width="39" height="9" fill="#b9d5c1"/><rect x="4.5" y="14.5" width="39" height="10" fill="#cde8d2"/><path d="M4.5 5.5H43.5M4.5 14.5H43.5M4.5 24.5H43.5M4.5 5.5V44M27.5 5.5V44M43.5 5.5V44" fill="none" stroke="#45585a" stroke-width="1"/><rect x="2.5" y="2.5" width="43" height="43" rx="3" fill="url(#tbl)"/><text x="29" y="39.6" font-family="Liberation Sans, sans-serif" font-weight="bold" font-size="28.5" fill="#8a8a8a" stroke="#8a8a8a" stroke-width="1" filter="url(#sblur)" textLength="15.5" lengthAdjust="spacingAndGlyphs">Σ</text></svg></body></html>
